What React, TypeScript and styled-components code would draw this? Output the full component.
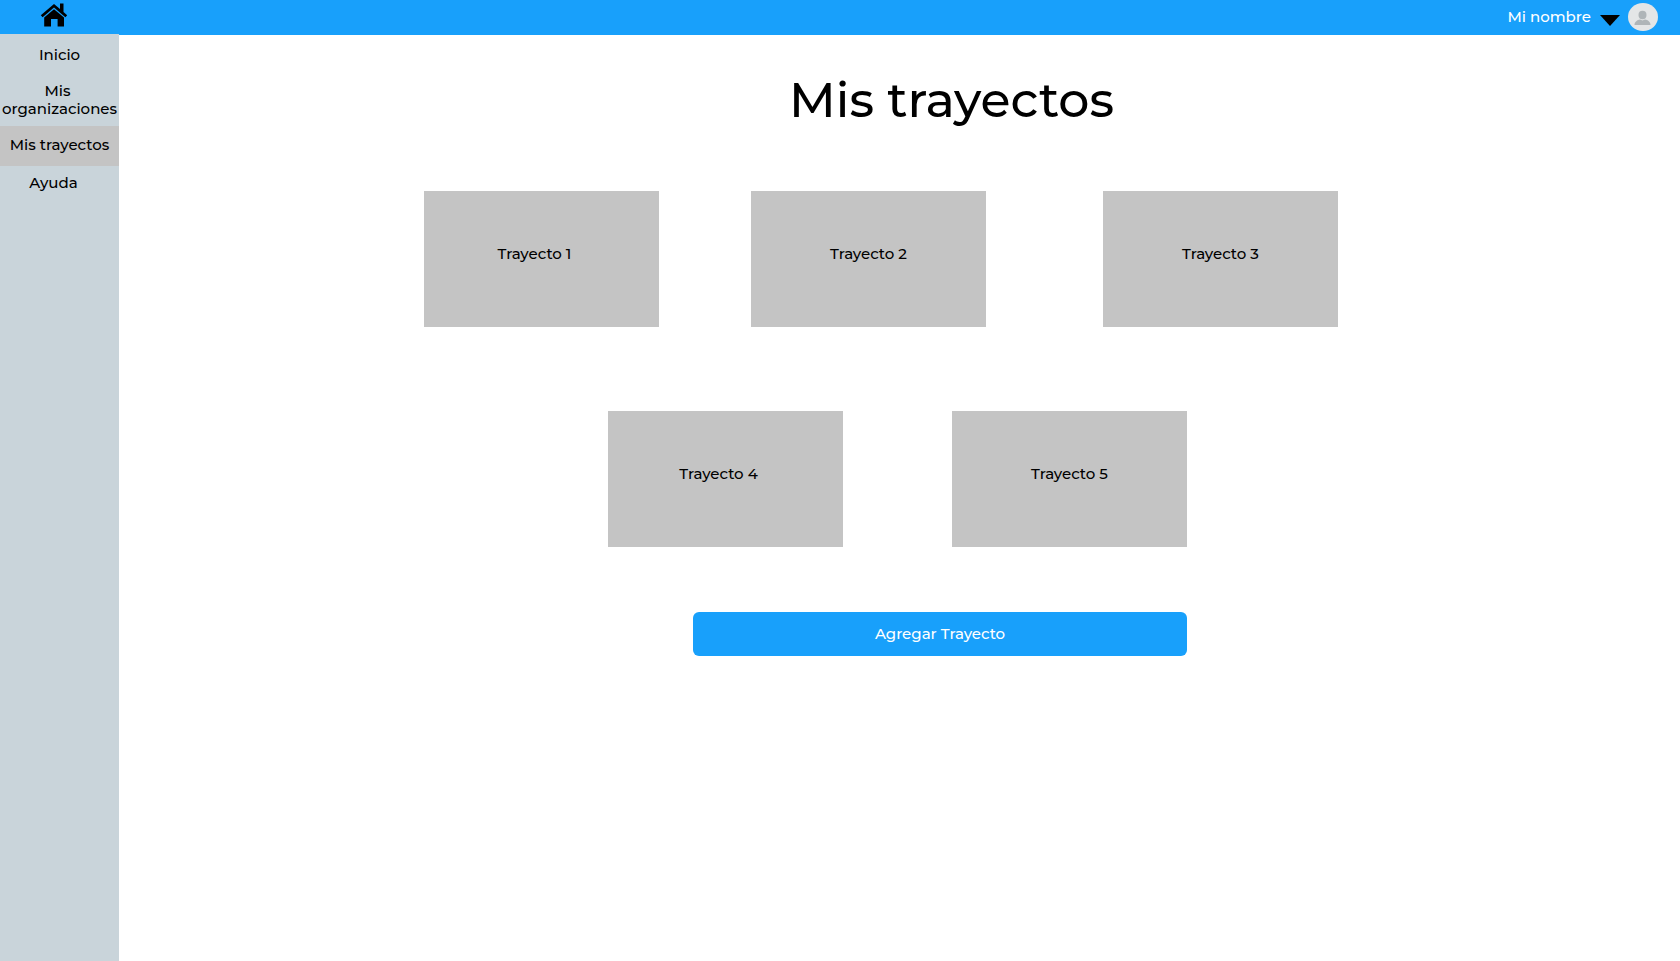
import React from "react";
import styled, { createGlobalStyle } from "styled-components";

const GlobalStyle = createGlobalStyle`
  *, *::before, *::after { box-sizing: border-box; }
  body {
    margin: 0;
    background: #ffffff;
    color: #000000;
    font: 500 15px/18px Montserrat, Inter, "Liberation Sans", sans-serif;
    -webkit-font-smoothing: antialiased;
  }
`;

const Page = styled.div`
  display: flex;
  flex-direction: column;
  min-height: 100vh;
`;

const TopBar = styled.header`
  display: flex;
  align-items: center;
  justify-content: space-between;
  height: 34px;
  padding: 0 22px 0 40px;
  background: #18a0fb;
`;

const HomeLink = styled.a`
  display: flex;
  padding-bottom: 4px;
  color: #000000;
`;

const UserMenu = styled.button`
  display: flex;
  align-items: center;
  padding: 0;
  border: 0;
  background: none;
  color: #ffffff;
  font: inherit;
  cursor: pointer;
`;

const Caret = styled.svg`
  margin: 6px 8px 0 9px;
`;

const Body = styled.div`
  display: flex;
  flex: 1;
`;

const Sidebar = styled.nav`
  flex: 0 0 119px;
  padding-top: 2px;
  background: #c9d4da;
`;

const NavLink = styled.a<{ $active?: boolean; $height?: number; $inset?: number }>`
  display: flex;
  align-items: center;
  justify-content: center;
  height: ${(p) => p.$height ?? 40}px;
  padding: 0 ${(p) => p.$inset ?? 0}px 2px 0;
  background: ${(p) => (p.$active ? "#c4c4c4" : "transparent")};
  color: inherit;
  text-align: center;
  text-decoration: none;
`;

const Content = styled.main`
  flex: 1;
  min-width: 0;
  border-top: 1px solid #18a0fb;
`;

const Title = styled.h1`
  margin: 0;
  padding: 35px 0 0 104px;
  font-size: 49px;
  font-weight: 500;
  line-height: 60px;
  text-align: center;
`;

const Row = styled.div<{ $columns: string; $top: number }>`
  display: grid;
  grid-template-columns: ${(p) => p.$columns};
  margin-top: ${(p) => p.$top}px;
`;

const Card = styled.button<{ $column: number }>`
  grid-column: ${(p) => p.$column};
  height: 136px;
  padding: 0 0 10px;
  border: 0;
  background: #c4c4c4;
  color: inherit;
  font: inherit;
  cursor: pointer;

  &:first-child {
    padding-right: 14px;
  }
`;

const AddButton = styled.button`
  grid-column: 2;
  height: 44px;
  padding: 0;
  border: 0;
  border-radius: 6px;
  background: #18a0fb;
  color: #ffffff;
  font: inherit;
  cursor: pointer;
`;

const HomeIcon = () => (
  <svg width="28" height="24" viewBox="0 0 28 24" fill="currentColor" aria-hidden="true">
    <path d="M14 1 0.8 12.2 2.6 14.2 14 4.6 25.4 14.2 27.2 12.2 23.5 9V0.5H20V6.1Z" />
    <path d="M14 6.2 4.2 14.4V23.5H11V16H17.6V23.5H24V14.4Z" />
  </svg>
);

const Avatar = () => (
  <svg width="30" height="28" viewBox="0 0 30 28" aria-hidden="true">
    <ellipse cx="15" cy="14" rx="15" ry="14" fill="#e4e6e7" />
    <ellipse cx="14.5" cy="12" rx="4" ry="4.2" fill="#afb5b8" />
    <path d="M6.5 22C6.5 18.8 9.4 17 12 16.6Q14.5 18.2 17 16.6C19.8 17 22.5 18.8 22.5 22Z" fill="#afb5b8" />
  </svg>
);

const firstRow = ["Trayecto 1", "Trayecto 2", "Trayecto 3"];
const secondRow = ["Trayecto 4", "Trayecto 5"];

const Cards = ({ names }: { names: string[] }) => (
  <>
    {names.map((name, i) => (
      <Card key={name} type="button" $column={i * 2 + 2}>
        {name}
      </Card>
    ))}
  </>
);

export default function App() {
  return (
    <Page>
      <GlobalStyle />
      <TopBar>
        <HomeLink href="#inicio" aria-label="Inicio">
          <HomeIcon />
        </HomeLink>
        <UserMenu type="button" aria-haspopup="menu">
          Mi nombre
          <Caret width="20" height="11" viewBox="0 0 20 11" aria-hidden="true">
            <path d="M0 0H20L10 11Z" fill="#000000" />
          </Caret>
          <Avatar />
        </UserMenu>
      </TopBar>
      <Body>
        <Sidebar>
          <NavLink href="#inicio">Inicio</NavLink>
          <NavLink href="#organizaciones" $height={50}>
            Mis&nbsp;
            <br />
            organizaciones
          </NavLink>
          <NavLink href="#trayectos" $active aria-current="page">
            Mis trayectos
          </NavLink>
          <NavLink href="#ayuda" $height={36} $inset={12}>
            Ayuda
          </NavLink>
        </Sidebar>
        <Content>
          <Title>Mis trayectos</Title>
          <Row $columns="305fr 235px 92fr 235px 117fr 235px 342fr" $top={61}>
            <Cards names={firstRow} />
          </Row>
          <Row $columns="489fr 235px 109fr 235px 493fr" $top={84}>
            <Cards names={secondRow} />
          </Row>
          <Row $columns="574fr 494px 493fr" $top={65}>
            <AddButton type="button">Agregar Trayecto</AddButton>
          </Row>
        </Content>
      </Body>
    </Page>
  );
}
